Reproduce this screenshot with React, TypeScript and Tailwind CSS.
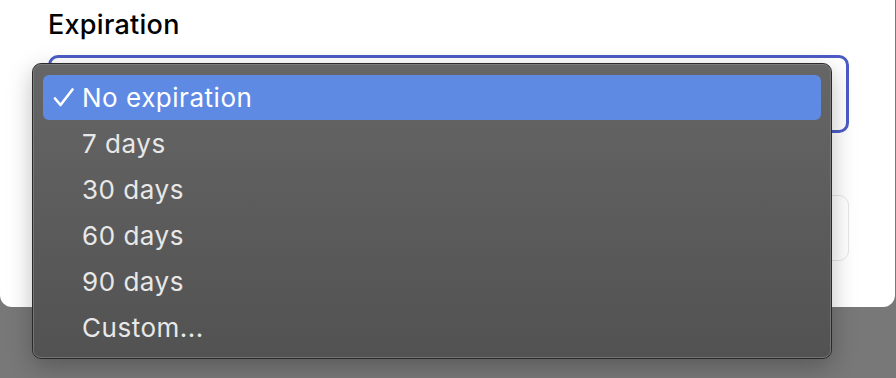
import React from 'react';

const options = ['No expiration', '7 days', '30 days', '60 days', '90 days', 'Custom...'];

function Check() {
  return (
    <svg width="21" height="19" viewBox="0 0 21 19" fill="none" className="block">
      <path d="M2 10.5 L7.5 17 L19.5 1.5" stroke="white" strokeWidth="2.6" strokeLinecap="round" strokeLinejoin="round" />
    </svg>
  );
}

export default function App() {
  const selected = 0;

  return (
    <div
      className="relative w-[896px] h-[378px] overflow-hidden bg-[#787878]"
      style={{ fontFamily: 'Inter, "Noto Sans", sans-serif' }}
    >
      {/* dialog card behind the menu */}
      <div className="w-[895px] h-[307px] bg-white rounded-b-[12px] pl-12 pr-[46px] pt-[9px]">
        <div className="text-[27px] font-medium text-black leading-[32px] tracking-[0.01em]">Expiration</div>
        <div className="mt-[14px] h-[78px] rounded-[10px] border-[3px] border-[#4c5cc5]" />
        <div className="mt-[62px] h-[66px] rounded-[10px] border border-[#e6e6e6] bg-white" />
      </div>

      {/* native select popup */}
      <div className="absolute left-[32px] top-[63px] w-[800px] h-[296px] rounded-[9px] border border-[#2a2a2a] shadow-[0_8px_24px_rgba(0,0,0,0.25)] bg-gradient-to-b from-[#666666] to-[#525252]">
        <div className="h-full rounded-[8px] border border-[#8a8a8a]/60 px-[9px] py-[10px]">
          {options.map((opt, i) => (
            <div
              key={opt}
              className={
                i === selected
                  ? 'flex items-center h-[45px] mb-px rounded-[6px] bg-[#5f8ae4] text-white'
                  : 'flex items-center h-[46px] rounded-[6px] text-[#e8e8e8]'
              }
            >
              <span className="w-[39px] pl-[10px]">{i === selected ? <Check /> : null}</span>
              <span className="text-[26px] leading-none tracking-[0.02em]">{opt}</span>
            </div>
          ))}
        </div>
      </div>
    </div>
  );
}
